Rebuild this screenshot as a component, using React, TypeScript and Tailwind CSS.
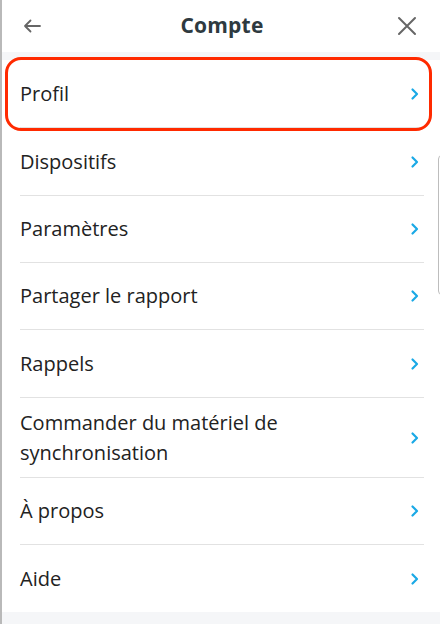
import React from 'react';

const items = [
  { label: 'Profil', h: 'h-[68px]' },
  { label: 'Dispositifs', h: 'h-[68px]' },
  { label: 'Paramètres', h: 'h-[67px]' },
  { label: 'Partager le rapport', h: 'h-[67px]' },
  { label: 'Rappels', h: 'h-[68px]' },
  { label: 'Commander du matériel de synchronisation', h: 'h-[80px]' },
  { label: 'À propos', h: 'h-[67px]' },
  { label: 'Aide', h: 'h-[67px]' },
];

function Chevron() {
  return (
    <svg width="10" height="14" viewBox="0 0 10 14" fill="none" className="shrink-0">
      <path d="M2.5 2.5 L7 7 L2.5 11.5" stroke="#1aa9e6" strokeWidth="2.2" strokeLinecap="round" strokeLinejoin="round" />
    </svg>
  );
}

export default function App() {
  return (
    <div
      className="relative w-[440px] h-[624px] bg-[#f5f6f8] overflow-hidden border-l-2 border-[#b9b9b9]"
      style={{ fontFamily: '"Open Sans", "Noto Sans", sans-serif' }}
    >
      {/* Header */}
      <div className="h-[52px] bg-white flex items-center justify-between px-[20px]">
        <svg width="20" height="16" viewBox="0 0 20 16" fill="none">
          <path d="M18 8H3M8.5 2.5L3 8l5.5 5.5" stroke="#666" strokeWidth="1.8" strokeLinecap="round" strokeLinejoin="round" />
        </svg>
        <h1 className="text-[21px] font-bold text-[#2e3a40] pl-[6px] tracking-[0.2px]">Compte</h1>
        <svg width="22" height="22" viewBox="0 0 22 22" fill="none" className="mr-[2px]">
          <path d="M3 3l16 16M19 3L3 19" stroke="#666" strokeWidth="2" strokeLinecap="round" />
        </svg>
      </div>

      {/* List */}
      <div className="mt-[8px] bg-white">
        {items.map((item, i) => (
          <div
            key={item.label}
            className={
              'flex items-center justify-between ml-[18px] mr-[16px] pr-[4px] ' +
              item.h +
              (i < items.length - 1 ? ' border-b border-[#e2e2e2]' : '')
            }
          >
            <span className="text-[20px] leading-[30px] text-[#222] max-w-[300px]">{item.label}</span>
            <Chevron />
          </div>
        ))}
      </div>

      {/* Highlight ring */}
      <div className="absolute left-[3px] top-[57px] w-[427px] h-[74px] rounded-[16px] border-[3px] border-[#ff2a00]" />

      {/* Panel edge on the right */}
      <div className="absolute left-[436px] top-[155px] w-[20px] h-[140px] rounded-[4px] border border-[#bdbdbd] bg-white" />
    </div>
  );
}
